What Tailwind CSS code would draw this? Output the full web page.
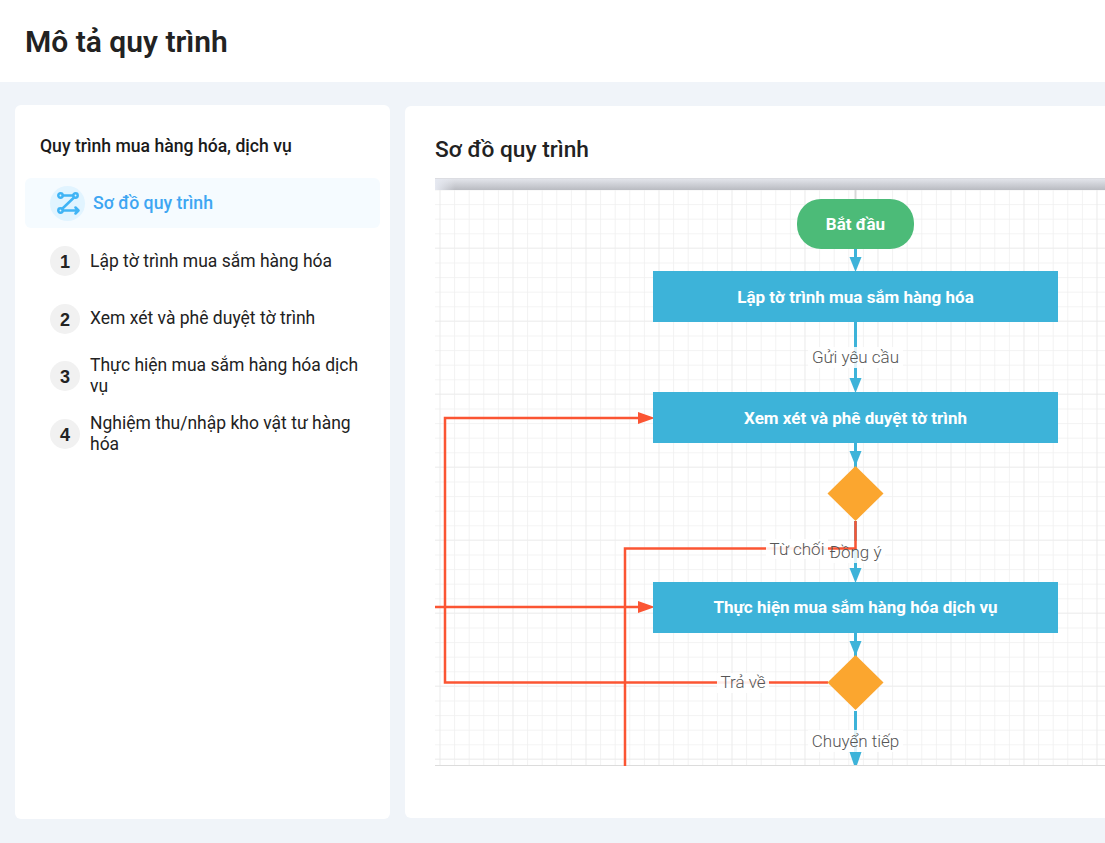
<!DOCTYPE html>
<html lang="vi">
<head>
    <meta charset="UTF-8">
    <meta name="viewport" content="width=device-width, initial-scale=1.0">
    <title>Mô tả quy trình</title>
    <script src="https://cdn.jsdelivr.net/npm/@tailwindcss/browser@4"></script>
</head>
<body class="h-[843px] w-[1105px] overflow-hidden bg-[#f0f4f9] font-['Roboto',sans-serif] text-[#222]">
    <!-- Header -->
    <header class="flex h-[82px] items-center bg-white pt-[2px] pl-[25px]">
        <h1 class="text-[30px] leading-none font-semibold text-[#222]">Mô tả quy trình</h1>
    </header>

    <!-- Main Content -->
    <main class="flex w-[1105px] gap-[15px] overflow-hidden pt-[23px] pl-[15px]">
        <!-- Sidebar -->
        <aside class="h-[714px] w-[375px] shrink-0 rounded-md bg-white px-[10px] pt-[31px]">
            <h2 class="pl-[15px] text-[17.6px] leading-[21px] font-medium text-[#1a1a1a]">Quy trình mua hàng hóa, dịch vụ</h2>
            <div class="mt-[21px] flex h-[50px] items-center gap-[8px] rounded-md bg-[#f5fbff] pl-[25px]">
                <div class="flex h-[35px] w-[35px] items-center justify-center rounded-full bg-[#e1f4ff]">
                    <svg width="24" height="24" viewBox="0 0 24 24" fill="none" stroke="#40b4f5" stroke-width="2.5" stroke-linecap="round" stroke-linejoin="round">
                        <circle cx="4.5" cy="4.5" r="2.2"/>
                        <circle cx="19.5" cy="4.5" r="2.2"/>
                        <circle cx="4.5" cy="19.5" r="2.2"/>
                        <path d="M7 4.5h10M18 6.5L6 18M7 19.5h15M19.5 16.5l3 3-3 3"/>
                    </svg>
                </div>
                <span class="pt-[1px] text-[17.7px] font-medium text-[#3ea6f2]">Sơ đồ quy trình</span>
            </div>
            <ol class="mt-[12px] flex flex-col gap-[15.5px] pl-[25px] pr-[20px]">
                <li class="flex h-[42px] items-center gap-[10px]">
                    <span class="flex h-[30px] w-[30px] shrink-0 items-center justify-center rounded-full bg-[#f1f1f1] pt-[3px] font-['Liberation_Sans',sans-serif] text-[18px] font-bold text-[#222]">1</span>
                    <span class="text-[17.5px] leading-[21px]">Lập tờ trình mua sắm hàng hóa</span>
                </li>
                <li class="flex h-[42px] items-center gap-[10px]">
                    <span class="flex h-[30px] w-[30px] shrink-0 items-center justify-center rounded-full bg-[#f1f1f1] pt-[3px] font-['Liberation_Sans',sans-serif] text-[18px] font-bold text-[#222]">2</span>
                    <span class="text-[17.5px] leading-[21px]">Xem xét và phê duyệt tờ trình</span>
                </li>
                <li class="flex h-[42px] items-center gap-[10px]">
                    <span class="flex h-[30px] w-[30px] shrink-0 items-center justify-center rounded-full bg-[#f1f1f1] pt-[3px] font-['Liberation_Sans',sans-serif] text-[18px] font-bold text-[#222]">3</span>
                    <span class="text-[17.5px] leading-[21px]">Thực hiện mua sắm hàng hóa dịch vụ</span>
                </li>
                <li class="flex h-[42px] items-center gap-[10px]">
                    <span class="flex h-[30px] w-[30px] shrink-0 items-center justify-center rounded-full bg-[#f1f1f1] pt-[3px] font-['Liberation_Sans',sans-serif] text-[18px] font-bold text-[#222]">4</span>
                    <span class="text-[17.5px] leading-[21px]">Nghiệm thu/nhập kho vật tư hàng hóa</span>
                </li>
            </ol>
        </aside>

        <!-- Diagram card -->
        <section class="mt-px h-[712px] w-[760px] shrink-0 rounded-md bg-white pt-[29px] pl-[30px]">
            <h2 class="text-[22.7px] leading-[30px] font-medium text-[#222]">Sơ đồ quy trình</h2>
            <div class="mt-[13px] h-[588px] w-[670px]">
                <svg width="670" height="588" viewBox="435 178 670 588" font-family="Roboto, sans-serif">
                    <defs>
                        <pattern id="gridMinor" x="439.5" y="189.5" width="14.6" height="14.6" patternUnits="userSpaceOnUse">
                            <path d="M0 0V14.6M0 0H14.6" stroke="#f0f0f0" stroke-width="1.6" fill="none"/>
                        </pattern>
                        <pattern id="gridMajor" x="585.5" y="247.5" width="73" height="73" patternUnits="userSpaceOnUse">
                            <path d="M0 0V73M0 0H73" stroke="#e8e8e8" stroke-width="1" fill="none"/>
                        </pattern>
                        <linearGradient id="ruler" x1="0" y1="0" x2="0" y2="1">
                            <stop offset="0" stop-color="#e6e8ee"/>
                            <stop offset="1" stop-color="#b9bbc1"/>
                        </linearGradient>
                        <linearGradient id="rulerLeft" x1="0" y1="0" x2="1" y2="0">
                            <stop offset="0" stop-color="#e6e9f1"/>
                            <stop offset="1" stop-color="#e6e9f1" stop-opacity="0"/>
                        </linearGradient>
                    </defs>

                    <!-- grid -->
                    <rect x="435" y="190" width="670" height="575" fill="#fff"/>
                    <rect x="435" y="190" width="670" height="575" fill="url(#gridMinor)"/>
                    <rect x="435" y="190" width="670" height="575" fill="url(#gridMajor)"/>
                    <path d="M855.5 190V200" stroke="#d8d8d8" stroke-width="2"/>
                    <rect x="435" y="178" width="670" height="12" fill="url(#ruler)"/>
                    <rect x="435" y="178" width="20" height="12" fill="url(#rulerLeft)"/>
                    <path d="M435 178.5H1105" stroke="#dcdde2" stroke-width="1"/>
                    <path d="M434 765.5H1105" stroke="#dcdcdc" stroke-width="1"/>

                    <!-- blue edges -->
                    <g stroke="#3db3d9" stroke-width="3" fill="none">
                        <path d="M855.5 249V262"/>
                        <path d="M855.5 322V385"/>
                        <path d="M855.5 443V470"/>
                        <path d="M855.5 521V575"/>
                        <path d="M855.5 633V660"/>
                        <path d="M855.5 711V760"/>
                    </g>
                    <g fill="#3db3d9">
                        <path d="M849.5 257H861.5L855.5 272Z"/>
                        <path d="M849.5 378H861.5L855.5 393Z"/>
                        <path d="M849.5 451H861.5L855.5 466Z"/>
                        <path d="M849.5 568H861.5L855.5 583Z"/>
                        <path d="M849.5 641H861.5L855.5 656Z"/>
                        <path d="M849.5 752H861.5L857 765H854Z"/>
                    </g>

                    <!-- edge label backgrounds -->
                    <g fill="#fff" fill-opacity="0.85">
                        <rect x="808" y="347" width="95" height="21"/>
                        <rect x="827" y="541" width="58" height="22"/>
                        <rect x="808" y="730" width="95" height="22"/>
                    </g>

                    <!-- red edges -->
                    <g stroke="#fb5533" stroke-width="2.5" fill="none">
                        <path d="M855.5 521V548.5H625V766"/>
                        <path d="M435 607H642"/>
                        <path d="M828 682.5H445V418H642"/>
                    </g>
                    <g fill="#fb5533">
                        <path d="M638 601L655 607L638 613Z"/>
                        <path d="M638 412L655 418L638 424Z"/>
                    </g>
                    <g fill="#fff" fill-opacity="0.9">
                        <rect x="766" y="539" width="62" height="20"/>
                        <rect x="717" y="673" width="52" height="20"/>
                    </g>

                    <!-- nodes -->
                    <rect x="797" y="199" width="117" height="50" rx="24" fill="#4cbb78"/>
                    <rect x="653" y="271" width="405" height="51" fill="#3db3d9"/>
                    <rect x="653" y="392" width="405" height="51" fill="#3db3d9"/>
                    <rect x="653" y="582" width="405" height="51" fill="#3db3d9"/>
                    <path d="M855.5 466L883.5 493.5L855.5 521L827.5 493.5Z" fill="#fba62f"/>
                    <path d="M855.5 655L883.5 682.5L855.5 710L827.5 682.5Z" fill="#fba62f"/>

                    <g fill="#fff" font-size="17" font-weight="700" text-anchor="middle">
                        <text x="855.5" y="229.5">Bắt đầu</text>
                        <text x="855.5" y="302.5">Lập tờ trình mua sắm hàng hóa</text>
                        <text x="855.5" y="423.5">Xem xét và phê duyệt tờ trình</text>
                        <text x="855.5" y="612.5">Thực hiện mua sắm hàng hóa dịch vụ</text>
                    </g>
                    <g fill="#555" font-size="17" font-weight="300" text-anchor="middle">
                        <text x="855.5" y="363">Gửi yêu cầu</text>
                        <text x="797" y="554.5">Từ chối</text>
                        <text x="855.5" y="557.5">Đồng ý</text>
                        <text x="743" y="688">Trả về</text>
                        <text x="855.5" y="747">Chuyển tiếp</text>
                    </g>
                </svg>
            </div>
        </section>
    </main>
</body>
</html>
